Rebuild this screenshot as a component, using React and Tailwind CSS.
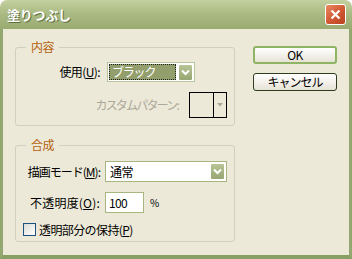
const font = { fontFamily: '"Noto Sans CJK JP", "Noto Sans", sans-serif' };

const ArrowBtn = () => (
  <span className="flex h-[17px] w-[15px] items-center justify-center rounded-[2px] border border-white bg-gradient-to-b from-[#b8c596] to-[#97a672]">
    <svg width="9" height="7" viewBox="0 0 9 7">
      <path d="M1 1.5 L4.5 5 L8 1.5" fill="none" stroke="#fff" strokeWidth="2" />
    </svg>
  </span>
);

const Group = ({ title, children, className }) => (
  <fieldset
    className={`rounded-[3px] border border-[#d0d0bf] px-0 ${className}`}
  >
    <legend className="ml-[10px] px-[5px] text-[12px] leading-[14px] text-[#b5610c]">
      {title}
    </legend>
    {children}
  </fieldset>
);

export default function App() {
  return (
    <div
      className="flex h-[259px] w-[352px] flex-col overflow-hidden text-[12px] tracking-[-0.6px] text-black"
      style={font}
    >
      {/* title bar */}
      <div className="flex h-[29px] shrink-0 items-center justify-between rounded-t-[7px] bg-gradient-to-b from-[#c3d0a0] via-[#a9b981] to-[#9aab72] pl-[7px] pr-[6px]">
        <span className="text-[13px] font-bold leading-none tracking-[-0.3px] text-white [text-shadow:1px_1px_0_#5f6f44]">
          塗りつぶし
        </span>
        <span className="flex h-[21px] w-[21px] items-center justify-center rounded-[3px] border border-white bg-gradient-to-br from-[#e98a62] via-[#d35a35] to-[#b9421f]">
          <svg width="11" height="11" viewBox="0 0 11 11">
            <path d="M1.5 1.5 L9.5 9.5 M9.5 1.5 L1.5 9.5" stroke="#fff" strokeWidth="2.2" />
          </svg>
        </span>
      </div>

      {/* body */}
      <div className="flex flex-1 border-x-[3px] border-b-[4px] border-x-[#93a870] border-b-[#88a064] bg-[#ece9d8]">
        <div className="ml-[12px] mt-[11px] w-[220px]">
          <Group title="内容">
            <div className="mt-[8px] flex items-center">
              <span className="w-[84px] text-right leading-none">使用(<u>U</u>):</span>
              <div className="ml-[7px] flex h-[20px] w-[88px] items-center border border-[#b8c69a] bg-white pl-[1px] pr-[1px]">
                <span className="flex h-[16px] flex-1 items-center border border-dotted border-[#222] bg-[#929e6b] pl-[2px] leading-none tracking-[-1.2px] text-white">
                  ブラック
                </span>
                <span className="ml-[2px]">
                  <ArrowBtn />
                </span>
              </div>
            </div>
            <div className="mb-[7px] mt-[10px] flex items-center justify-end pr-[7px]">
              <span className="leading-none tracking-[-1.8px] text-[#aca899]">カスタムパターン:</span>
              <div className="ml-[11px] flex h-[26px] w-[38px] border-[1.5px] border-black">
                <span className="flex-1 border-r border-black" />
                <span className="flex w-[12px] items-center justify-center">
                  <svg width="6" height="4" viewBox="0 0 6 4">
                    <path d="M0 0 H6 L3 3.5 Z" fill="#aca899" />
                  </svg>
                </span>
              </div>
            </div>
          </Group>

          <Group title="合成" className="mt-[12px]">
            <div className="mt-[9px] flex items-center">
              <span className="w-[84px] text-right leading-none tracking-[-1px]">描画モード(<u>M</u>):</span>
              <div className="ml-[5px] flex h-[21px] w-[122px] items-center justify-between border border-[#a7b67f] bg-white pl-[4px] pr-[1px]">
                <span className="leading-none">通常</span>
                <ArrowBtn />
              </div>
            </div>
            <div className="mt-[10px] flex items-center">
              <span className="w-[84px] text-right leading-none tracking-[0.2px]">不透明度(<u>O</u>):</span>
              <div className="ml-[5px] flex h-[21px] w-[39px] items-center border border-[#a7b67f] bg-white pl-[3px] leading-none">
                100
              </div>
              <span className="ml-[6px] text-[10px] leading-none">%</span>
            </div>
            <div className="mb-[5px] mt-[10px] flex items-center pl-[7px]">
              <span className="h-[13px] w-[13px] border border-[#1c5180] bg-gradient-to-br from-[#dcdcd5] to-white" />
              <span className="ml-[3px] leading-none">透明部分の保持(<u>P</u>)</span>
            </div>
          </Group>
        </div>

        {/* buttons */}
        <div className="ml-[18px] mt-[17px] flex flex-col gap-[9px]">
          <button className="h-[18px] w-[84px] rounded-[3px] border-2 border-[#8fb464] bg-gradient-to-b from-white to-[#e6e3d6] text-[12px] leading-none">
            OK
          </button>
          <button className="h-[18px] w-[84px] rounded-[3px] border border-[#2e3d1f] bg-gradient-to-b from-white to-[#e6e3d6] text-[12px] leading-none tracking-[-1px]">
            キャンセル
          </button>
        </div>
      </div>
    </div>
  );
}
